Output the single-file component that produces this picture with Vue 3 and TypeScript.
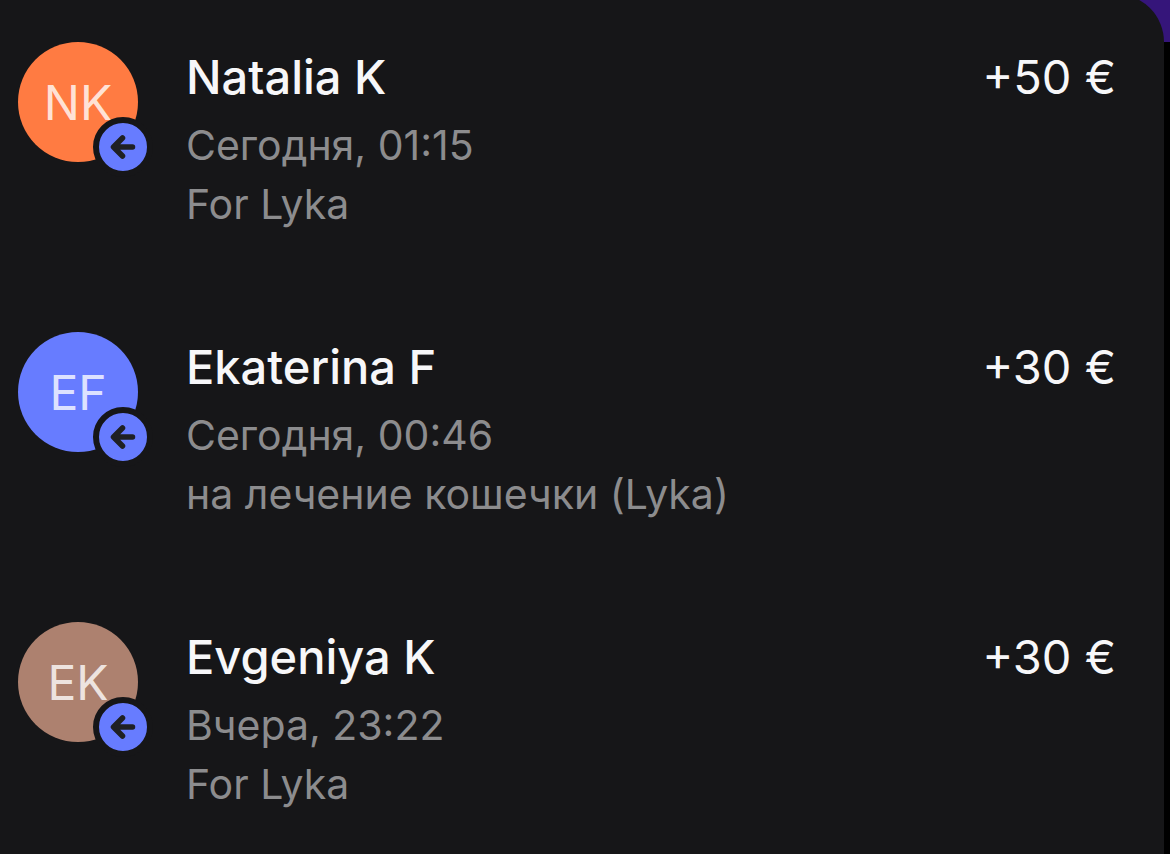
<script setup lang="ts">
interface Transfer {
  name: string
  initials: string
  time: string
  note: string
  amount: string
  tone: string
}

const transfers: Transfer[] = [
  { name: 'Natalia K', initials: 'NK', time: 'Сегодня, 01:15', note: 'For Lyka', amount: '+50 €', tone: 'orange' },
  { name: 'Ekaterina F', initials: 'EF', time: 'Сегодня, 00:46', note: 'на лечение кошечки (Lyka)', amount: '+30 €', tone: 'blue' },
  { name: 'Evgeniya K', initials: 'EK', time: 'Вчера, 23:22', note: 'For Lyka', amount: '+30 €', tone: 'brown' },
]
</script>

<template>
  <div class="screen">
    <div class="backdrop"></div>
    <main class="card">
      <ul class="list">
        <li v-for="t in transfers" :key="t.name" class="row">
          <div class="avatar" :class="t.tone">
            {{ t.initials }}
            <span class="badge">
              <svg viewBox="0 0 48 48" width="48" height="48" fill="none" stroke="#1f2024" stroke-width="5.500" stroke-linecap="round" stroke-linejoin="round" aria-hidden="true">
                <path d="M23.500 15L14.500 24L23.500 33M15 24H33.500" />
              </svg>
            </span>
          </div>
          <div class="info">
            <h2 class="name">{{ t.name }}</h2>
            <p class="detail">{{ t.time }}</p>
            <p class="detail">{{ t.note }}</p>
          </div>
          <div class="amount">{{ t.amount }}</div>
        </li>
      </ul>
    </main>
  </div>
</template>

<style>
body {
  margin: 0;
  background: #000;
}
</style>

<style scoped>
.screen {
  position: relative;
  min-height: 100vh;
  box-sizing: border-box;
  padding-right: 6px;
  overflow: hidden;
  font-family: Inter, "Noto Sans", sans-serif;
}
.backdrop {
  position: absolute;
  top: 0;
  right: 0;
  width: 60px;
  height: 42px;
  background: #35157a;
}
.card {
  position: relative;
  min-height: calc(100vh + 6px);
  box-sizing: border-box;
  margin-top: -6px;
  padding: 48px 48px 0 18px;
  border-top-right-radius: 48px;
  background: #161618;
}
.list {
  display: grid;
  gap: 98px;
  margin: 0;
  padding: 0;
  list-style: none;
}
.row {
  display: flex;
  align-items: flex-start;
}
.avatar {
  position: relative;
  flex: none;
  width: 120px;
  height: 120px;
  margin-right: 48px;
  border-radius: 50%;
  color: rgba(255, 255, 255, 0.8);
  font-size: 48px;
  line-height: 122px;
  text-align: center;
}
.orange {
  background: #ff7b42;
}
.blue {
  background: #677cff;
}
.brown {
  background: #ad816f;
}
.badge {
  position: absolute;
  right: -15px;
  bottom: -15px;
  width: 48px;
  height: 48px;
  border: 6px solid #161618;
  border-radius: 50%;
  background: #677cff;
}
.badge svg {
  display: block;
}
.info {
  flex: 1;
  min-width: 0;
}
.name {
  margin: 5px 0 9px;
  color: #f7f7f9;
  font-size: 47px;
  font-weight: 500;
  line-height: 60px;
}
.detail {
  margin: 0;
  color: #8c8c8e;
  font-size: 41px;
  line-height: 59px;
}
.amount {
  margin-top: 5px;
  color: #f7f7f9;
  font-size: 47px;
  line-height: 60px;
}
</style>
